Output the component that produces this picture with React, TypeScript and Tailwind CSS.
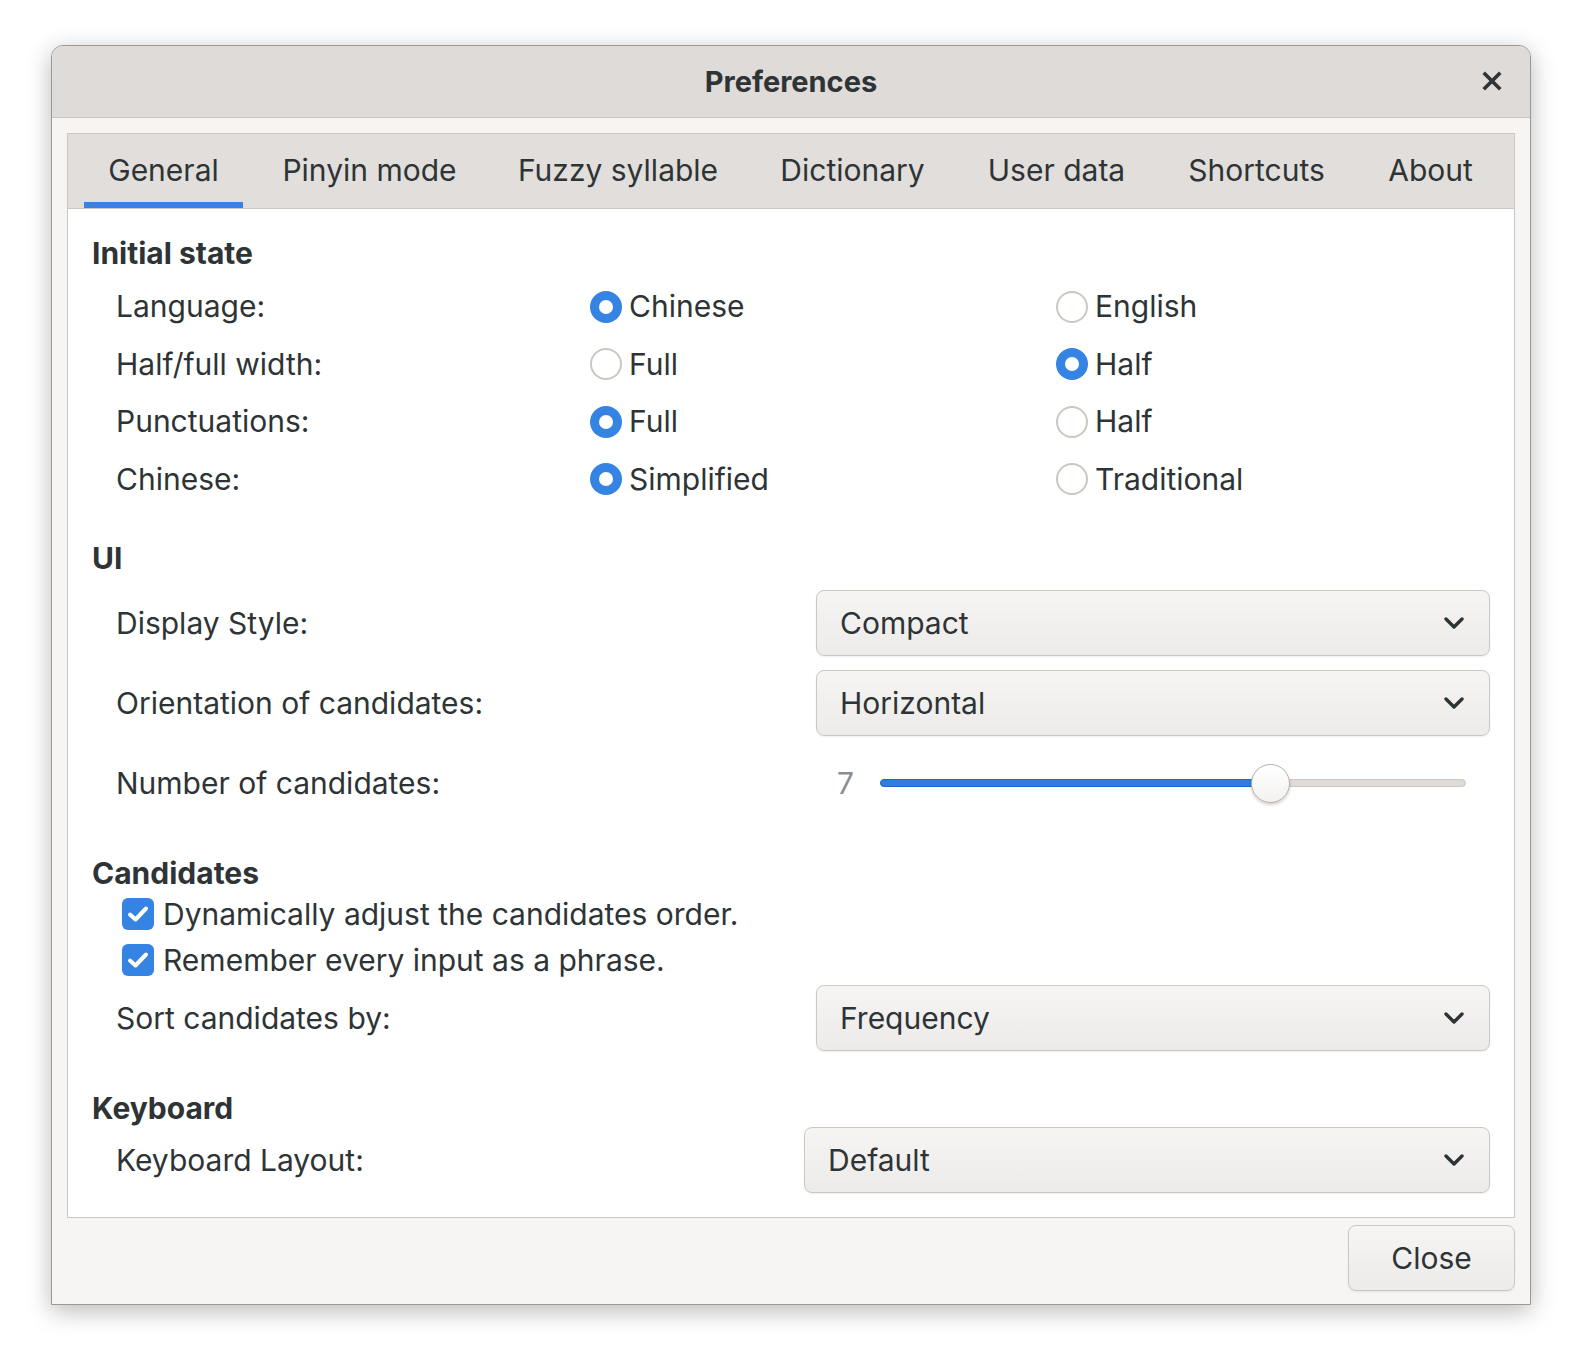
import React from "react";

const FONT = { fontFamily: "Inter, 'Noto Sans', sans-serif" };

function Radio({ checked, label }: { checked: boolean; label: string }) {
  return (
    <div className="flex items-center">
      {checked ? (
        <div className="w-[32px] h-[32px] rounded-full bg-[#3584e4] flex items-center justify-center">
          <div className="w-[14px] h-[14px] rounded-full bg-white" />
        </div>
      ) : (
        <div className="w-[32px] h-[32px] rounded-full border-2 border-[#cdc7c2] bg-white" />
      )}
      <span className="ml-[7px]">{label}</span>
    </div>
  );
}

function Chevron() {
  return (
    <svg width="20" height="12" viewBox="0 0 20 12" fill="none">
      <path d="M2 2 L10 10 L18 2" stroke="#2e3436" strokeWidth="3.4" strokeLinecap="round" strokeLinejoin="round" />
    </svg>
  );
}

function Combo({ value, width }: { value: string; width: string }) {
  return (
    <div
      className={`${width} h-[66px] rounded-[8px] border border-[#cdc7c2] bg-gradient-to-b from-[#f6f5f4] to-[#edebe9] shadow-[0_1px_2px_rgba(0,0,0,0.07)] flex items-center justify-between pl-[23px] pr-[25px]`}
    >
      <span>{value}</span>
      <Chevron />
    </div>
  );
}

function Check({ label }: { label: string }) {
  return (
    <div className="flex items-center h-[46px] pl-[30px]">
      <div className="w-[32px] h-[32px] rounded-[6px] bg-[#3584e4] flex items-center justify-center">
        <svg width="22" height="18" viewBox="0 0 22 18" fill="none">
          <path d="M3 9.5 L8.5 14.5 L19 3.5" stroke="white" strokeWidth="4" strokeLinecap="round" strokeLinejoin="round" />
        </svg>
      </div>
      <span className="ml-[9px]">{label}</span>
    </div>
  );
}

const tabs: { name: string; w: string }[] = [
  { name: "General", w: "w-[159px]" },
  { name: "Pinyin mode", w: "w-[219px]" },
  { name: "Fuzzy syllable", w: "w-[244px]" },
  { name: "Dictionary", w: "w-[191px]" },
  { name: "User data", w: "w-[183px]" },
  { name: "Shortcuts", w: "w-[183px]" },
  { name: "About", w: "w-[131px]" },
];

export default function App() {
  return (
    <div
      className="w-[1582px] h-[1364px] bg-white pl-[51px] pt-[45px] text-[#2e3436] text-[30px]"
      style={FONT}
    >
      <div className="w-[1480px] h-[1260px] bg-[#f6f5f4] rounded-t-[12px] border border-[#9a9996] shadow-[0_6px_24px_rgba(0,0,0,0.28)] flex flex-col">
        {/* Title bar */}
        <div className="h-[72px] rounded-t-[11px] bg-[#dedbd8] border-b border-[#c8c3be] flex items-center relative shrink-0">
          <div className="flex-1 text-center font-bold text-[29px]">Preferences</div>
          <div className="absolute right-[27px] top-[24px]">
            <svg width="22" height="22" viewBox="0 0 22 22">
              <path d="M4 4 L18 18 M18 4 L4 18" stroke="#2e3436" strokeWidth="3.6" strokeLinecap="square" />
            </svg>
          </div>
        </div>

        {/* Body */}
        <div className="flex-1 flex flex-col px-[15px] pt-[15px] pb-[14px]">
          <div className="border border-[#cdc7c2] flex flex-col">
            {/* Tab bar */}
            <div className="h-[75px] bg-[#e1dedb] border-b border-[#cdc7c2] flex pl-[16px] gap-[17px]">
              {tabs.map((t, i) => (
                <div key={t.name} className={`${t.w} h-full flex items-center justify-center relative`}>
                  <span className="mt-[-1px]">{t.name}</span>
                  {i === 0 && <div className="absolute left-0 right-0 bottom-0 h-[6px] bg-[#3584e4]" />}
                </div>
              ))}
            </div>

            {/* Content */}
            <div className="bg-white pl-[24px] pr-[24px] pt-[24px] pb-[24px] flex flex-col">
              <div className="h-[40px] flex items-center font-bold">Initial state</div>
              <div className="pl-[24px] mt-[5px]">
                {[
                  ["Language:", "Chinese", true, "English", false],
                  ["Half/full width:", "Full", false, "Half", true],
                  ["Punctuations:", "Full", true, "Half", false],
                  ["Chinese:", "Simplified", true, "Traditional", false],
                ].map((r) => (
                  <div key={r[0] as string} className="grid grid-cols-[474px_466px_1fr] h-[57.5px] items-center">
                    <span>{r[0] as string}</span>
                    <Radio label={r[1] as string} checked={r[2] as boolean} />
                    <Radio label={r[3] as string} checked={r[4] as boolean} />
                  </div>
                ))}
              </div>

              <div className="h-[40px] flex items-center font-bold mt-[30px]">UI</div>
              <div className="pl-[24px] mt-[12px] flex flex-col gap-[14px]">
                <div className="flex items-center justify-between">
                  <span>Display Style:</span>
                  <Combo value="Compact" width="w-[674px]" />
                </div>
                <div className="flex items-center justify-between">
                  <span>Orientation of candidates:</span>
                  <Combo value="Horizontal" width="w-[674px]" />
                </div>
                <div className="flex items-center justify-between h-[66px]">
                  <span>Number of candidates:</span>
                  <div className="w-[674px] flex items-center h-full">
                    <span className="text-[#8b8e8f] w-[64px] pl-[21px]">7</span>
                    <div className="relative w-[586px] h-[8px] rounded-full bg-[#dedbd8] border border-[#cdc7c2]">
                      <div className="absolute left-[-1px] top-[-1px] h-[8px] w-[392px] rounded-full bg-[#2f7ee0] border border-[#1c66c7]" />
                      <div className="absolute left-[370px] top-[-16px] w-[39px] h-[39px] rounded-full border border-[#b6afa8] bg-gradient-to-b from-white to-[#f3f2f1] shadow-[0_2px_3px_rgba(0,0,0,0.18)]" />
                    </div>
                  </div>
                </div>
              </div>

              <div className="h-[36px] flex items-center font-bold mt-[39px]">Candidates</div>
              <Check label="Dynamically adjust the candidates order." />
              <Check label="Remember every input as a phrase." />
              <div className="pl-[24px] mt-[2px] flex items-center justify-between">
                <span>Sort candidates by:</span>
                <Combo value="Frequency" width="w-[674px]" />
              </div>

              <div className="h-[36px] flex items-center font-bold mt-[39px]">Keyboard</div>
              <div className="pl-[24px] mt-[1px] flex items-center justify-between">
                <span>Keyboard Layout:</span>
                <Combo value="Default" width="w-[686px]" />
              </div>
            </div>
          </div>

          <div className="flex justify-end mt-[7px]">
            <div className="w-[167px] h-[66px] rounded-[8px] border border-[#cdc7c2] bg-gradient-to-b from-[#f6f5f4] to-[#edebe9] shadow-[0_1px_2px_rgba(0,0,0,0.07)] flex items-center justify-center">
              Close
            </div>
          </div>
        </div>
      </div>
    </div>
  );
}
